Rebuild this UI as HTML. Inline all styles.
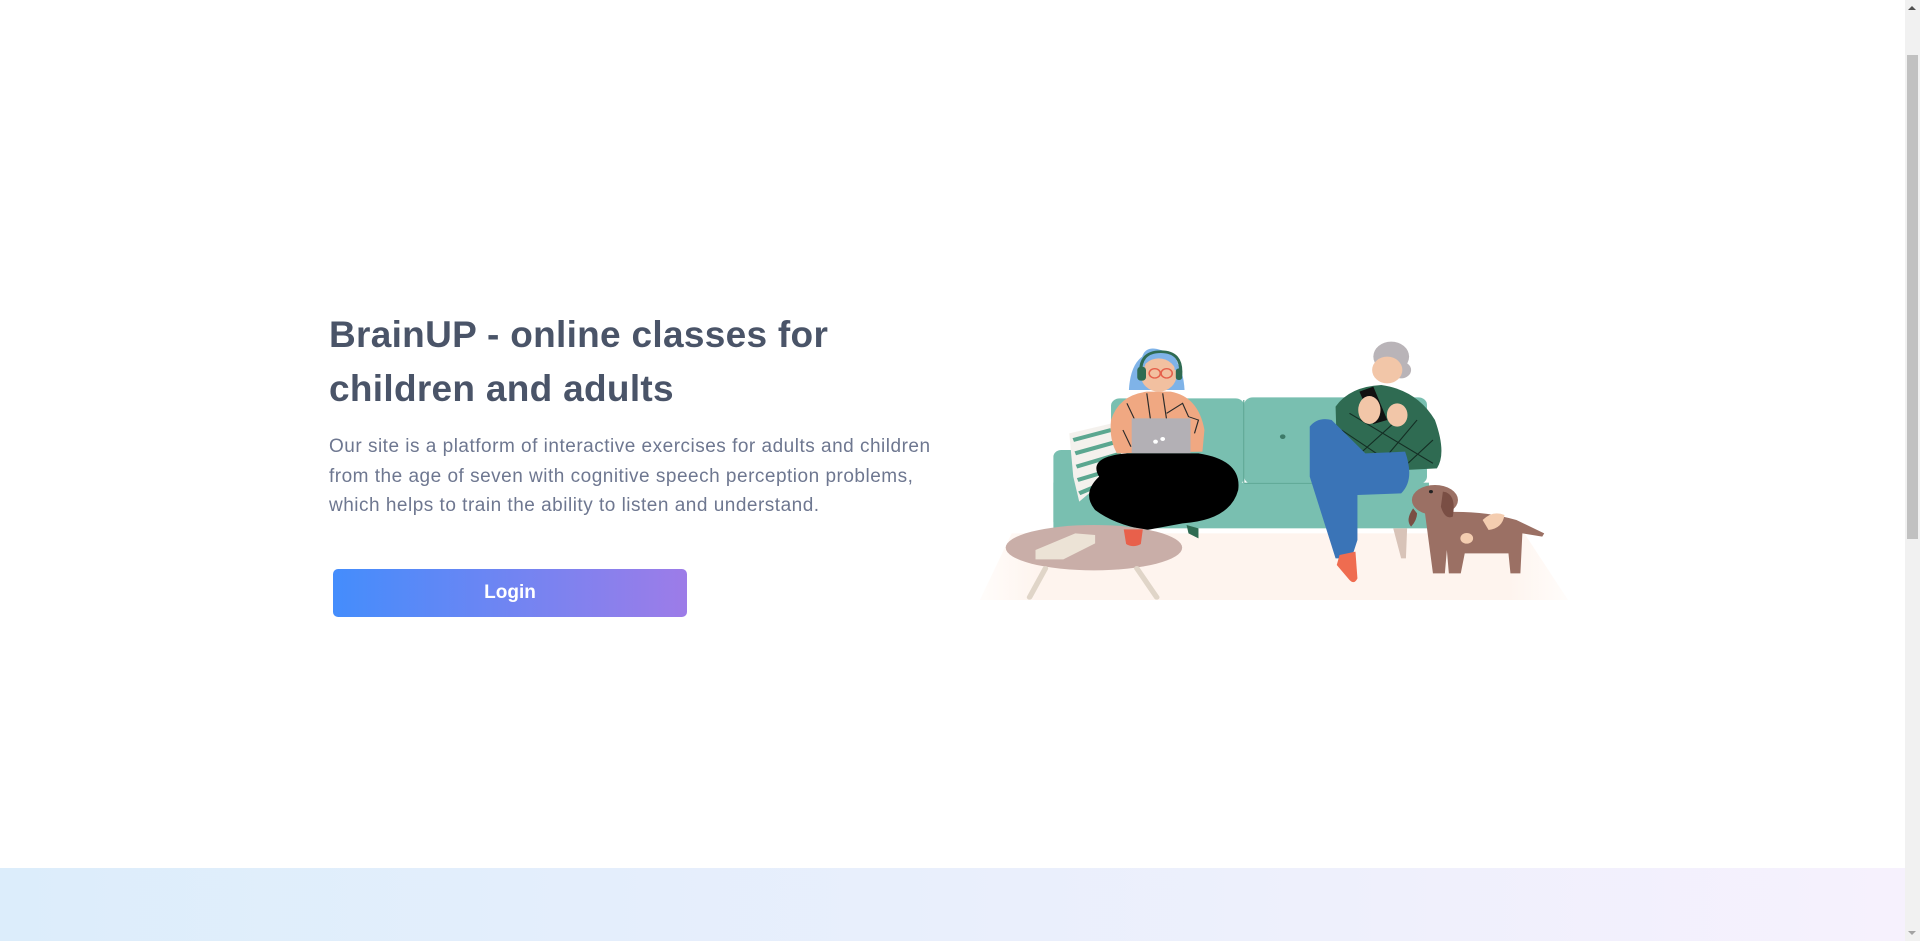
<!DOCTYPE html>
<html><head><meta charset="utf-8"><style>
html,body{margin:0;padding:0;width:1920px;height:941px;overflow:hidden;background:#fff;font-family:"Liberation Sans",sans-serif;position:relative}
h1{position:absolute;left:329px;top:308px;margin:0;font-size:37px;line-height:54px;color:#4a5468;font-weight:bold;letter-spacing:0.3px}
p{position:absolute;left:329px;top:432px;margin:0;font-size:19px;line-height:29.5px;color:#6e7790;white-space:nowrap;letter-spacing:0.5px}
.btn{position:absolute;left:333px;top:569px;width:354px;height:48px;border-radius:5px;background:linear-gradient(90deg,#448dfc,#9d7ce8);color:#fff;font-size:19px;font-weight:bold;text-align:center;line-height:47px}
.band{position:absolute;left:0;top:868px;width:1905px;height:73px;background:linear-gradient(90deg,#dcedfb,#f6f1fd)}
.sb{position:absolute;left:1905px;top:0;width:15px;height:941px;background:#f1f1f1}
.th{position:absolute;left:1907px;top:55px;width:11px;height:484px;background:#c1c1c1}
.up{position:absolute;left:1908px;top:6px;width:0;height:0;border-left:4px solid transparent;border-right:4px solid transparent;border-bottom:4px solid #505050}
.dn{position:absolute;left:1908px;top:931px;width:0;height:0;border-left:4px solid transparent;border-right:4px solid transparent;border-top:4px solid #a3a3a3}
svg{position:absolute;left:960px;top:320px}
</style></head><body>
<h1>BrainUP - online classes for<br>children and adults</h1>
<p>Our site is a platform of interactive exercises for adults and children<br>from the age of seven with cognitive speech perception problems,<br>which helps to train the ability to listen and understand.</p>
<div class="btn">Login</div>
<svg width="620" height="290" viewBox="0 0 1560 870" preserveAspectRatio="none">
<defs><linearGradient id="fl" x1="0" x2="1"><stop offset="0" stop-color="#fff6f0" stop-opacity="0.3"/><stop offset="0.1" stop-color="#fef4ee"/><stop offset="0.9" stop-color="#fef4ee"/><stop offset="1" stop-color="#fff6f0" stop-opacity="0.3"/></linearGradient></defs>
<polygon points="130,640 1420,640 1530,840 50,840" fill="url(#fl)"/>
<rect x="380" y="235" width="335" height="260" rx="22" fill="#79bfb0"/>
<rect x="715" y="232" width="460" height="260" rx="22" fill="#79bfb0"/>
<line x1="714" y1="240" x2="714" y2="490" stroke="#5fa896" stroke-width="3"/>
<rect x="235" y="390" width="170" height="235" rx="20" fill="#79bfb0"/>
<rect x="235" y="488" width="945" height="137" fill="#79bfb0"/>
<line x1="715" y1="490" x2="1100" y2="490" stroke="#5fa896" stroke-width="3"/>
<circle cx="812" cy="350" r="7" fill="#3d7a68"/>
<polygon points="1090,625 1125,625 1122,715 1110,715" fill="#d8c3b8"/>
<polygon points="275,340 390,308 425,420 300,545 285,470" fill="#f4f1ed"/>
<g stroke="#5ba790" stroke-width="12"><line x1="285" y1="360" x2="380" y2="330"/><line x1="290" y1="400" x2="395" y2="365"/><line x1="293" y1="440" x2="405" y2="400"/><line x1="296" y1="480" x2="380" y2="450"/><line x1="300" y1="520" x2="340" y2="500"/></g>
<path d="M425,210 Q430,100 495,95 Q560,100 565,210 Z" fill="#7fb3e8"/>
<ellipse cx="500" cy="165" rx="45" ry="50" fill="#f2c0a0"/>
<path d="M455,140 Q455,70 505,90 Q550,100 550,150 L540,150 Q540,110 505,105 Q470,100 465,140Z" fill="#7fb3e8"/>
<path d="M455,165 Q450,95 505,95 Q560,95 555,165" fill="none" stroke="#2f6b52" stroke-width="8"/>
<rect x="446" y="140" width="22" height="42" rx="10" fill="#2f6b52"/><rect x="543" y="145" width="16" height="35" rx="8" fill="#2f6b52"/>
<circle cx="490" cy="160" r="14" fill="none" stroke="#e5604b" stroke-width="4"/><circle cx="520" cy="160" r="14" fill="none" stroke="#e5604b" stroke-width="4"/>
<path d="M380,300 Q400,225 470,215 L530,215 Q600,230 615,330 L610,395 L395,400 Q375,360 380,300Z" fill="#f0a882"/>
<g stroke="#2b2b2b" stroke-width="3" fill="none"><path d="M470,220 L490,390"/><path d="M510,220 L520,300"/><path d="M520,280 L560,250 L575,290 L600,300 L590,340"/><path d="M420,250 L440,300 M410,330 L430,380"/></g>
<rect x="432" y="295" width="148" height="105" fill="#b3b0b5"/>
<circle cx="492" cy="365" r="6" fill="#fff"/><circle cx="510" cy="357" r="6" fill="#fff"/>
<path d="M350,470 Q320,410 420,400 L600,400 Q710,420 700,510 Q680,600 560,610 L470,630 Q390,615 340,570 Q305,520 350,470Z" fill="#000"/>
<polygon points="570,615 600,625 600,655 575,640" fill="#2f6b52"/>
<ellipse cx="337" cy="683" rx="222" ry="68" fill="#c9aea8"/>
<g stroke="#e0d5c8" stroke-width="14" stroke-linecap="round"><line x1="215" y1="745" x2="175" y2="832"/><line x1="445" y1="745" x2="495" y2="832"/></g>
<polygon points="190,690 290,640 340,645 340,670 260,718 190,718" fill="#ece3d6"/>
<path d="M412,628 L460,628 L455,672 Q436,685 418,672Z" fill="#e8604b"/>
<circle cx="1085" cy="110" r="45" fill="#b9b4b8"/><circle cx="1110" cy="150" r="25" fill="#b9b4b8"/>
<ellipse cx="1075" cy="150" rx="38" ry="40" fill="#f2c6a8"/>
<path d="M945,260 Q980,200 1060,195 Q1150,210 1195,300 Q1225,400 1200,445 L1120,450 L1020,480 L950,460 Z" fill="#2f6b52"/>
<g stroke="#142e24" stroke-width="3" fill="none"><path d="M960,330 L1110,450 M980,280 L1190,430 M1100,300 L970,440 M1150,300 L1030,470 M1190,360 L1100,460"/></g>
<path d="M880,320 Q900,290 935,300 L1020,400 L1120,395 Q1145,480 1110,520 L1000,525 L1000,660 L985,715 L945,715 L880,470Z" fill="#3a74b7"/>
<path d="M955,705 L995,695 L1000,775 Q992,795 980,780 L948,735Z" fill="#ef6c50"/>
<polygon points="1005,215 1040,200 1075,300 1040,312" fill="#111"/>
<ellipse cx="1030" cy="270" rx="28" ry="42" fill="#f2c6a8"/><ellipse cx="1100" cy="285" rx="26" ry="35" fill="#f2c6a8"/>
<path d="M1170,580 Q1300,565 1400,600 L1470,640 L1465,650 L1415,640 L1410,760 L1385,760 L1380,700 L1270,700 L1260,760 L1230,760 L1225,690 L1220,760 L1190,760 Z" fill="#9b7064"/>
<ellipse cx="1195" cy="540" rx="58" ry="45" fill="#9b7064"/>
<path d="M1215,515 Q1250,520 1240,590 Q1220,600 1210,560Z" fill="#7a4e44"/>
<path d="M1140,565 Q1120,600 1135,620 Q1150,600 1150,580Z" fill="#7a4e44"/>
<circle cx="1185" cy="515" r="5" fill="#222"/>
<path d="M1315,600 Q1340,570 1370,585 Q1365,625 1330,630Z" fill="#f4cdb0"/>
<circle cx="1275" cy="655" r="16" fill="#f4cdb0"/>
</svg>
<div class="band"></div>
<div class="sb"></div><div class="th"></div><div class="up"></div><div class="dn"></div>
</body></html>
